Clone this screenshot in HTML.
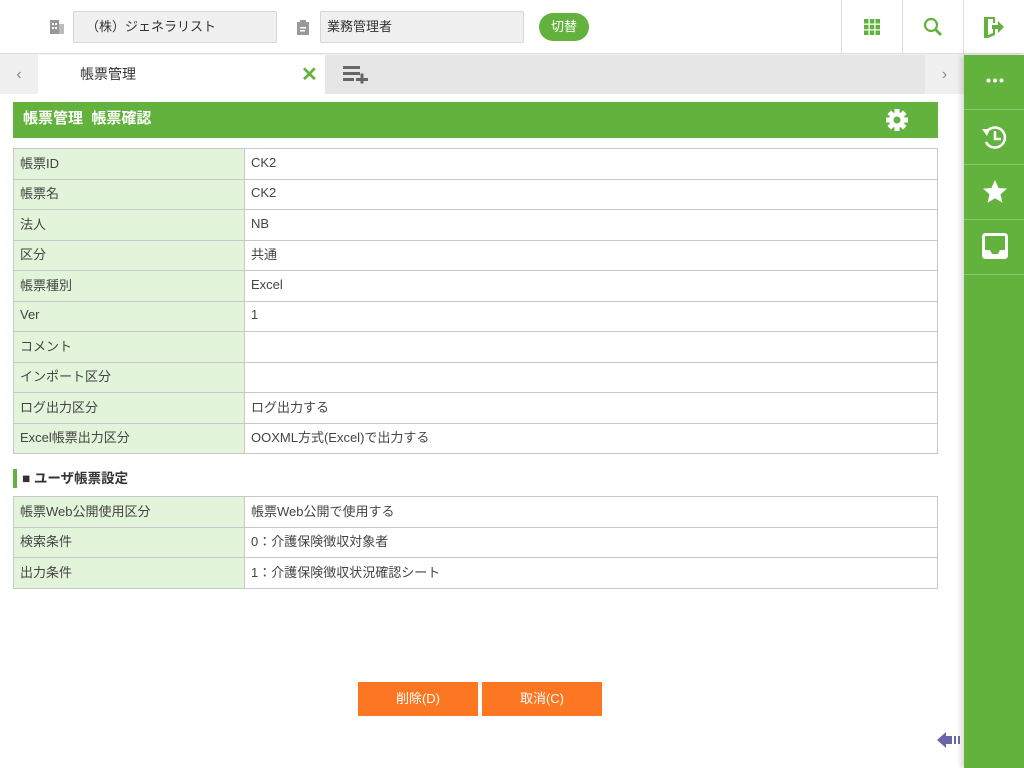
<!DOCTYPE html><html><head><meta charset="utf-8"><style>
*{margin:0;padding:0;box-sizing:border-box}
body{width:1024px;height:768px;overflow:hidden;background:#fff;font-family:"Liberation Sans","Noto Sans CJK JP",sans-serif;font-size:13px;color:#333;position:relative}
.abs{position:absolute}
.inp{position:absolute;top:11px;height:32px;background:#f0f0f0;border:1px solid #d6d6d6;border-radius:2px;padding-left:12px;line-height:30px;font-size:13px}
table{position:absolute;left:13px;width:925px;border-collapse:collapse}
td{border:1px solid #c8c8c8;height:30.5px;padding:0 6px 3px;font-size:13px;color:#444}
td.l{background:#e2f4da;width:231px}
.sb{position:absolute;left:964px;width:60px;height:55px;border-bottom:1px solid #8bc56c}
</style></head><body>
<div class="abs" style="left:0;top:0;width:1024px;height:54px;border-bottom:1px solid #ddd;box-shadow:0 1px 3px rgba(0,0,0,.1)"></div>
<svg class="abs" style="left:49px;top:19px" width="16" height="16"><rect x="1" y="1" width="9" height="14" fill="#999"/><rect x="10" y="5" width="5" height="10" fill="#bbb"/><g fill="#fff"><rect x="3" y="4" width="2" height="2"/><rect x="6" y="4" width="2" height="2"/><rect x="3" y="8" width="2" height="2"/><rect x="6" y="8" width="2" height="2"/></g></svg>
<div class="inp" style="left:73px;width:204px">（株）ジェネラリスト</div>
<svg class="abs" style="left:296px;top:19px" width="14" height="17"><rect x="1" y="3" width="12" height="13" fill="#999"/><rect x="4" y="1" width="6" height="4" fill="#999"/><rect x="4" y="8" width="6" height="1.5" fill="#fff"/><rect x="4" y="11" width="5" height="1.5" fill="#fff"/></svg>
<div class="inp" style="left:320px;width:204px;padding-left:6px">業務管理者</div>
<div class="abs" style="left:539px;top:13px;width:50px;height:28px;border-radius:14px;background:#62b23d;color:#fff;text-align:center;line-height:28px;font-size:13px">切替</div>
<div class="abs" style="left:841px;top:0;width:1px;height:54px;background:#ddd"></div>
<div class="abs" style="left:902px;top:0;width:1px;height:54px;background:#ddd"></div>
<div class="abs" style="left:963px;top:0;width:1px;height:54px;background:#ddd"></div>
<svg class="abs" style="left:864px;top:19px" width="16" height="16" fill="#62b23d"><rect x="0" y="0" width="4.5" height="4.5"/><rect x="5.8" y="0" width="4.5" height="4.5"/><rect x="11.5" y="0" width="4.5" height="4.5"/><rect x="0" y="5.8" width="4.5" height="4.5"/><rect x="5.8" y="5.8" width="4.5" height="4.5"/><rect x="11.5" y="5.8" width="4.5" height="4.5"/><rect x="0" y="11.5" width="4.5" height="4.5"/><rect x="5.8" y="11.5" width="4.5" height="4.5"/><rect x="11.5" y="11.5" width="4.5" height="4.5"/></svg>
<svg class="abs" style="left:923px;top:17px" width="20" height="20"><circle cx="8" cy="8" r="6" fill="none" stroke="#62b23d" stroke-width="2.2"/><line x1="12.5" y1="12.5" x2="18" y2="18" stroke="#62b23d" stroke-width="2.8"/></svg>
<svg class="abs" style="left:983px;top:16px" width="22" height="22" fill="#62b23d"><path d="M1 1h11v6h-2V3H5l0 16 5-2v-4h2v6l-7 3H1z"/><path d="M9 9h6V5l6 6-6 6v-4H9z"/></svg>
<div class="abs" style="left:0;top:55px;width:964px;height:39px;background:#e6e6e6"></div>
<div class="abs" style="left:0;top:55px;width:38px;height:39px;background:#f0f0f0;color:#888;text-align:center;line-height:39px;font-size:16px">‹</div>
<div class="abs" style="left:38px;top:55px;width:287px;height:39px;background:#fff;line-height:39px;padding-left:42px;font-size:14px">帳票管理</div>
<div class="abs" style="left:301px;top:62px;color:#62b23d;font-size:20px;font-weight:bold">✕</div>
<svg class="abs" style="left:343px;top:66px" width="26" height="18" fill="#666"><rect x="0" y="0" width="17" height="3"/><rect x="0" y="6" width="17" height="3"/><rect x="0" y="12" width="11" height="3"/><rect x="13" y="12" width="12" height="3"/><rect x="17.5" y="7.5" width="3" height="10"/></svg>
<div class="abs" style="left:925px;top:55px;width:39px;height:39px;background:#f0f0f0;color:#888;text-align:center;line-height:39px;font-size:16px">›</div>
<div class="abs" style="left:964px;top:55px;width:60px;height:713px;background:#62b23d;box-shadow:-3px 0 5px rgba(0,0,0,.15)"></div>
<div class="sb" style="top:55px"></div>
<svg class="abs" style="left:986px;top:78px" width="18" height="5" fill="#fff"><circle cx="2.5" cy="2.5" r="2"/><circle cx="9" cy="2.5" r="2"/><circle cx="15.5" cy="2.5" r="2"/></svg>
<div class="sb" style="top:110px"></div><div class="sb" style="top:165px"></div><div class="sb" style="top:220px"></div>
<svg class="abs" style="left:981px;top:123px" width="28" height="28"><path d="M5 10A10 10 0 1 1 5 19" fill="none" stroke="#fff" stroke-width="2.5"/><path d="M1 6l8 0-3 7z" fill="#fff"/><path d="M14 8v8h6" fill="none" stroke="#fff" stroke-width="2.5"/></svg>
<svg class="abs" style="left:982px;top:179px" width="26" height="26"><path d="M13 1l3.5 8 8.5.6-6.5 5.6 2 8.6L13 19.2 5.5 23.8l2-8.6L1 9.6l8.5-.6z" fill="#fff"/></svg>
<svg class="abs" style="left:982px;top:233px" width="26" height="26"><rect x="1.5" y="1.5" width="23" height="23" rx="2" fill="none" stroke="#fff" stroke-width="3"/><path d="M1 17h7l2 4h6l2-4h7v8H1z" fill="#fff"/></svg>
<div class="abs" style="left:13px;top:102px;width:925px;height:36px;background:#62b23d;color:#fff;font-weight:bold;font-size:15px;line-height:34px;padding-left:10px">帳票管理&nbsp;&nbsp;帳票確認</div>
<svg class="abs" style="left:885px;top:108px" width="24" height="24"><g fill="#fff"><circle cx="12" cy="12" r="8"/><rect x="9.5" y="1" width="5" height="22"/><rect x="1" y="9.5" width="22" height="5"/><rect x="9.5" y="1" width="5" height="22" transform="rotate(45 12 12)"/><rect x="9.5" y="1" width="5" height="22" transform="rotate(-45 12 12)"/></g><circle cx="12" cy="12" r="3.5" fill="#62b23d"/></svg>
<table style="top:148px">
<tr><td class="l">帳票ID</td><td>CK2</td></tr>
<tr><td class="l">帳票名</td><td>CK2</td></tr>
<tr><td class="l">法人</td><td>NB</td></tr>
<tr><td class="l">区分</td><td>共通</td></tr>
<tr><td class="l">帳票種別</td><td>Excel</td></tr>
<tr><td class="l">Ver</td><td>1</td></tr>
<tr><td class="l">コメント</td><td></td></tr>
<tr><td class="l">インポート区分</td><td></td></tr>
<tr><td class="l">ログ出力区分</td><td>ログ出力する</td></tr>
<tr><td class="l">Excel帳票出力区分</td><td>OOXML方式(Excel)で出力する</td></tr>
</table>
<div class="abs" style="left:13px;top:469px;width:4px;height:19px;background:#62b23d"></div>
<div class="abs" style="left:22px;top:469px;font-weight:bold;font-size:13.5px;line-height:19px">■ ユーザ帳票設定</div>
<table style="top:496px">
<tr><td class="l">帳票Web公開使用区分</td><td>帳票Web公開で使用する</td></tr>
<tr><td class="l">検索条件</td><td>0：介護保険徴収対象者</td></tr>
<tr><td class="l">出力条件</td><td>1：介護保険徴収状況確認シート</td></tr>
</table>
<div class="abs" style="left:358px;top:682px;width:120px;height:34px;background:#fd7622;color:#fff;text-align:center;line-height:34px">削除(D)</div>
<div class="abs" style="left:482px;top:682px;width:120px;height:34px;background:#fd7622;color:#fff;text-align:center;line-height:34px">取消(C)</div>
<svg class="abs" style="left:937px;top:731px" width="26" height="18" fill="#6a64a8"><path d="M0 9l9-8v4h6v8H9v4z"/><rect x="17" y="5" width="2" height="8"/><rect x="21" y="5" width="2" height="8"/></svg>
</body></html>
